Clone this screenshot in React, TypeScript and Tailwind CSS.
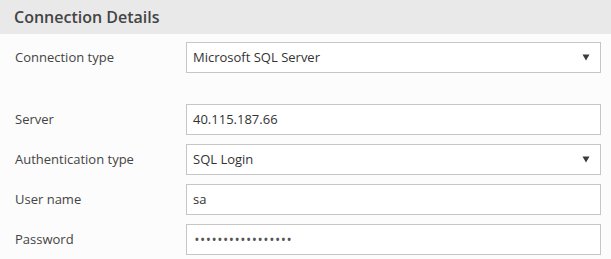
const rows = [
  { label: "Server", value: "40.115.187.66" },
  { label: "Authentication type", value: "SQL Login", select: true },
  { label: "User name", value: "sa" },
  { label: "Password", value: "•".repeat(17), password: true },
];

function Caret() {
  return (
    <svg width="8" height="7" viewBox="0 0 8 7" className="shrink-0">
      <path d="M0.5 0.5 H7.5 L4 6.5 Z" fill="#3a3a3a" />
    </svg>
  );
}

function Field({
  value,
  select = false,
  password = false,
}: {
  value: string;
  select?: boolean;
  password?: boolean;
}) {
  return (
    <div className="flex-1 h-[31px] border border-[#c6c6c6] bg-white flex items-center pl-[6px] pr-[10px]">
      <span
        className={
          password
            ? "flex-1 pl-[2px] text-[10px] font-bold tracking-[2px] text-[#555]"
            : "flex-1 text-[13px] text-[#333]"
        }
      >
        {value}
      </span>
      {select && <Caret />}
    </div>
  );
}

function Row({
  label,
  value,
  select,
  password,
}: {
  label: string;
  value: string;
  select?: boolean;
  password?: boolean;
}) {
  return (
    <div className="flex items-center">
      <div className="w-[171px] text-[13px] text-[#444]">{label}</div>
      <Field value={value} select={select} password={password} />
    </div>
  );
}

export default function App() {
  return (
    <div
      className="w-[611px] h-[259px] bg-[#fcfcfc] overflow-hidden"
      style={{ fontFamily: '"Open Sans", "Noto Sans", sans-serif' }}
    >
      <div className="h-[34px] bg-[#e9e9e9] flex items-center pl-[14px]">
        <h2 className="text-[16px] font-semibold text-[#444]">Connection Details</h2>
      </div>

      <div className="pl-[15px] pr-[10px] pt-[8px]">
        <div className="mb-[31px]">
          <Row label="Connection type" value="Microsoft SQL Server" select />
        </div>
        <div className="flex flex-col gap-[9px]">
          {rows.map((r) => (
            <Row key={r.label} {...r} />
          ))}
        </div>
      </div>
    </div>
  );
}
